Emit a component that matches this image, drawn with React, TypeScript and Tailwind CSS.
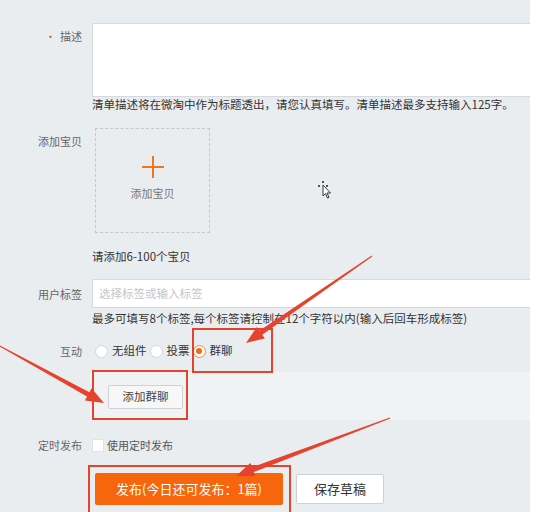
const font = { fontFamily: '"Noto Sans CJK SC", "Noto Sans", sans-serif' };

type Pt = [number, number];

function arrowPoints(tail: Pt, tip: Pt, headLen = 18, headW = 14, tailW = 1, neckW = 5) {
  const dx = tip[0] - tail[0];
  const dy = tip[1] - tail[1];
  const len = Math.hypot(dx, dy);
  const ux = dx / len;
  const uy = dy / len;
  const nx = -uy;
  const ny = ux;
  const bx = tip[0] - ux * headLen;
  const by = tip[1] - uy * headLen;
  const pts: Pt[] = [
    [tail[0] + (nx * tailW) / 2, tail[1] + (ny * tailW) / 2],
    [bx + (nx * neckW) / 2, by + (ny * neckW) / 2],
    [bx + (nx * headW) / 2, by + (ny * headW) / 2],
    tip,
    [bx - (nx * headW) / 2, by - (ny * headW) / 2],
    [bx - (nx * neckW) / 2, by - (ny * neckW) / 2],
    [tail[0] - (nx * tailW) / 2, tail[1] - (ny * tailW) / 2],
  ];
  return pts.map((p) => p.join(',')).join(' ');
}

function Label({ children, className = '' }: { children: React.ReactNode; className?: string }) {
  return (
    <div className={`w-[92px] shrink-0 pr-[10px] text-right text-[11px] text-[#666] ${className}`}>
      {children}
    </div>
  );
}

function Radio({ checked, label }: { checked?: boolean; label: string }) {
  return (
    <div className="flex items-center gap-[4px] mr-[3px]">
      <span
        className={`w-[13px] h-[13px] rounded-full border bg-white flex items-center justify-center ${
          checked ? 'border-[#f08a4b]' : 'border-[#d4d6da]'
        }`}
      >
        {checked && <span className="w-[6px] h-[6px] rounded-full bg-[#f46a12]" />}
      </span>
      <span className="text-[11.5px] text-[#333]">{label}</span>
    </div>
  );
}

function Annotations() {
  const red = '#e5432d';
  return (
    <svg className="absolute inset-0 pointer-events-none" width={545} height={512}>
      <rect x={193} y={329} width={79} height={43} fill="none" stroke={red} strokeWidth={2} />
      <rect x={93} y={371} width={94} height={48} fill="none" stroke={red} strokeWidth={2} />
      <rect x={89} y={466} width={201} height={50} fill="none" stroke={red} strokeWidth={2} />
      <polygon points={arrowPoints([372, 256], [246, 343])} fill={red} />
      <polygon points={arrowPoints([-2, 345], [104, 403])} fill={red} />
      <polygon points={arrowPoints([390, 418], [236, 476])} fill={red} />
      {/* mouse cursor */}
      <g transform="translate(318,181)">
        <circle cx={5} cy={1} r={1} fill="#222" />
        <circle cx={1} cy={5} r={1} fill="#222" />
        <circle cx={9} cy={5} r={1} fill="#222" />
        <path d="M5 4 L5 15 L7.5 12.5 L9.5 17 L11 16.3 L9 12 L12.5 12 Z" fill="#fff" stroke="#222" strokeWidth={0.9} />
      </g>
    </svg>
  );
}

export default function App() {
  return (
    <div className="relative w-[545px] h-[512px] overflow-hidden bg-white" style={font}>
      <div className="w-[530px] h-full bg-[#eaedf0] pt-[23px]">
        {/* 描述 */}
        <div className="flex">
          <Label className="pt-[5px]">
            <span className="text-[#e5432d] mr-[4px]">•</span>描述
          </Label>
          <div className="flex-1">
            <div className="h-[74px] bg-white border border-r-0 border-[#d6d9dd]" />
            <div className="text-[11.5px] leading-[14px] text-[#333] whitespace-nowrap">
              清单描述将在微淘中作为标题透出，请您认真填写。清单描述最多支持输入125字。
            </div>
          </div>
        </div>

        {/* 添加宝贝 */}
        <div className="flex mt-[17px]">
          <Label className="pt-[5px]">添加宝贝</Label>
          <div className="flex-1">
            <div className="ml-[3px] w-[115px] h-[105px] border border-dashed border-[#c3c6ca] flex flex-col items-center pt-[27px]">
              <div className="relative w-[22px] h-[22px]">
                <span className="absolute left-0 top-[10px] w-[22px] h-[2px] bg-[#f5731c]" />
                <span className="absolute top-0 left-[10px] w-[2px] h-[22px] bg-[#f5731c]" />
              </div>
              <span className="mt-[7px] text-[11px] text-[#777]">添加宝贝</span>
            </div>
            <div className="mt-[16px] text-[11.5px] leading-[14px] text-[#333]">请添加6-100个宝贝</div>
          </div>
        </div>

        {/* 用户标签 */}
        <div className="flex mt-[16px]">
          <Label className="pt-[7px]">用户标签</Label>
          <div className="flex-1">
            <div className="h-[29px] bg-white border border-r-0 border-[#d6d9dd] flex items-center px-[6px] text-[11.5px] text-[#c4c6ca]">
              选择标签或输入标签
            </div>
            <div className="mt-[3px] text-[11.5px] leading-[14px] text-[#333] whitespace-nowrap">
              最多可填写8个标签,每个标签请控制在12个字符以内(输入后回车形成标签)
            </div>
          </div>
        </div>

        {/* 互动 */}
        <div className="flex items-center mt-[16px] h-[20px]">
          <Label>互动</Label>
          <div className="flex items-center ml-[3px]">
            <Radio label="无组件" />
            <Radio label="投票" />
            <Radio checked label="群聊" />
          </div>
        </div>

        <div className="ml-[90px] mt-[11px] h-[48px] bg-[#f1f2f4] pt-[10px] pl-[18px]">
          <button className="h-[24px] w-[75px] bg-[#f7f7f7] border border-[#cfd1d4] rounded-[2px] text-[11.5px] text-[#444]">
            添加群聊
          </button>
        </div>

        {/* 定时发布 */}
        <div className="flex items-center mt-[17px] h-[16px]">
          <Label>定时发布</Label>
          <div className="flex items-center gap-[3px]">
            <span className="w-[12px] h-[13px] bg-white border border-[#e2e4e7]" />
            <span className="text-[11px] text-[#555]">使用定时发布</span>
          </div>
        </div>

        <div className="flex mt-[20px] ml-[95px] gap-[13px]">
          <button className="h-[32px] w-[188px] bg-[#f7650c] rounded-[2px] text-white text-[13px]">
            发布(今日还可发布：1篇)
          </button>
          <button className="h-[30px] mt-[1px] w-[88px] bg-white border border-[#cfd1d4] rounded-[2px] text-[13px] text-[#333]">
            保存草稿
          </button>
        </div>
      </div>
      <Annotations />
    </div>
  );
}
